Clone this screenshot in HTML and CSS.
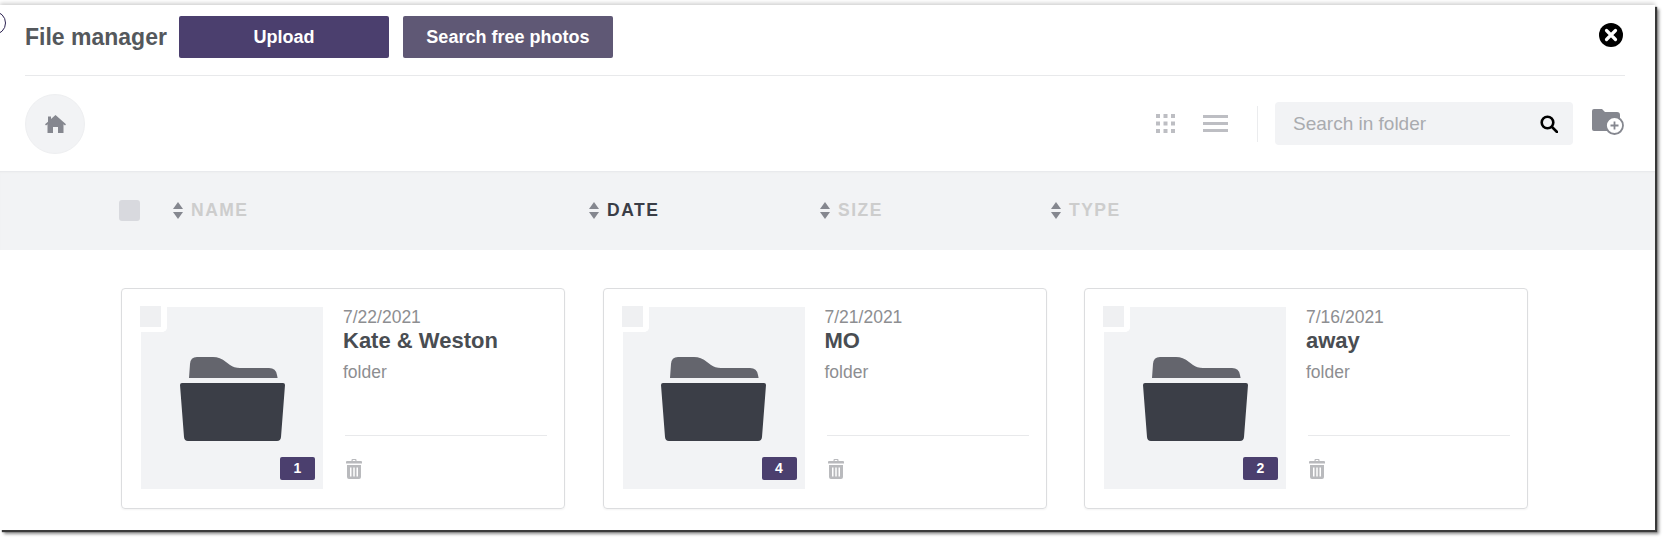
FILE: index.html
```html
<!DOCTYPE html>
<html lang="en">
<head>
    <meta charset="UTF-8">
    <meta name="viewport" content="width=device-width, initial-scale=1.0">
    <title>File manager</title>
    <link rel="stylesheet" href="styles.css">
</head>
<body>
    <svg class="defs" width="0" height="0">
        <symbol id="sort" viewBox="0 0 10 17">
            <path class="sort-up" d="M5 0 10 7H0z"/>
            <path class="sort-down" d="M0 10h10l-5 7z"/>
        </symbol>
        <symbol id="folder" viewBox="0 0 105 84">
            <path fill="#64656d" d="M9 21 10 7q.4-7 7-7h16q7 0 13 5l4 3q4 3 10 3h29q7 0 8 7l.6 3z"/>
            <path fill="#3b3e47" d="M2 26h101q2 0 2 2l-4 52q-.3 4-4 4H8q-3.700 0-4-4L0 28q0-2 2-2z"/>
        </symbol>
        <symbol id="trash" viewBox="0 0 16 20">
            <path d="M5.500 2V1q0-1 1-1h3q1 0 1 1v1H15q1 0 1 1v1.500H0V3q0-1 1-1zM6.700 1v1h2.600V1z"/>
            <path fill-rule="evenodd" d="M1 6h14v12q0 2-2 2H3q-2 0-2-2zm3 2.500v9h1.500v-9zm3.250 0v9h1.500v-9zm3.250 0v9H12v-9z"/>
        </symbol>
    </svg>

    <span class="stray-circle"></span>

    <div class="panel">
        <header class="top-bar">
            <div class="top-inner">
                <h1>File manager</h1>
                <button class="btn btn-upload">Upload</button>
                <button class="btn btn-photos">Search free photos</button>
                <svg class="close-icon" viewBox="0 0 24 24">
                    <circle cx="12" cy="12" r="12" fill="#000"/>
                    <path d="M7.500 7.500l9 9m0-9l-9 9" stroke="#fff" stroke-width="3.200" stroke-linecap="round"/>
                </svg>
            </div>
        </header>

        <div class="toolbar">
            <div class="home-btn">
                <svg width="21" height="18" viewBox="0 0 21 18" fill="#85878f">
                    <path d="M10.500 0 21 9.300l-1 1.200-1.500-1.300V18H13v-6H8v6H2.500V9.200L1 10.500 0 9.300 3 6.700V1.500h3v2.600z"/>
                </svg>
            </div>
            <div class="toolbar-right">
                <svg class="grid-icon" width="19" height="19" viewBox="0 0 19 19" fill="#bdbec3">
                    <path d="M0 0h4v4H0zm7.500 0h4v4h-4zM15 0h4v4h-4zM0 7.500h4v4H0zm7.500 0h4v4h-4zm7.500 0h4v4h-4zM0 15h4v4H0zm7.500 0h4v4h-4zM15 15h4v4h-4z"/>
                </svg>
                <div class="list-icon"><span></span><span></span><span></span></div>
                <div class="sep"></div>
                <div class="search-box">
                    <span class="search-text">Search in folder</span>
                    <svg width="18" height="18" viewBox="0 0 18 18" fill="none" stroke="#000" stroke-width="2.600">
                        <circle cx="7.500" cy="7.500" r="5.800"/>
                        <path d="M12 12l5 5" stroke-linecap="round"/>
                    </svg>
                </div>
                <svg class="add-folder" width="32" height="26" viewBox="0 0 32 26">
                    <path fill="#85878f" d="M0 2q0-2 2-2h8l3 3h12q3 0 3 3v14q0 2-2 2H2q-2 0-2-2z"/>
                    <circle cx="22.500" cy="16.500" r="8.500" fill="#fff" stroke="#85878f" stroke-width="1.800"/>
                    <path d="M22.500 12.500v8m-4-4h8" stroke="#85878f" stroke-width="1.800"/>
                </svg>
            </div>
        </div>

        <div class="sort-bar">
            <span class="check check-all"></span>
            <div class="sort-col col-name"><svg class="sort-icon"><use href="#sort"/></svg>NAME</div>
            <div class="sort-col col-date active"><svg class="sort-icon"><use href="#sort"/></svg>DATE</div>
            <div class="sort-col col-size"><svg class="sort-icon"><use href="#sort"/></svg>SIZE</div>
            <div class="sort-col"><svg class="sort-icon"><use href="#sort"/></svg>TYPE</div>
        </div>

        <div class="cards">
            <div class="card">
                <div class="thumb">
                    <span class="thumb-check"></span>
                    <svg class="folder-icon"><use href="#folder"/></svg>
                    <span class="badge">1</span>
                </div>
                <div class="info">
                    <div class="date">7/22/2021</div>
                    <div class="name">Kate &amp; Weston</div>
                    <div class="kind">folder</div>
                    <div class="actions"><svg class="trash-icon"><use href="#trash"/></svg></div>
                </div>
            </div>
            <div class="card">
                <div class="thumb">
                    <span class="thumb-check"></span>
                    <svg class="folder-icon"><use href="#folder"/></svg>
                    <span class="badge">4</span>
                </div>
                <div class="info">
                    <div class="date">7/21/2021</div>
                    <div class="name">MO</div>
                    <div class="kind">folder</div>
                    <div class="actions"><svg class="trash-icon"><use href="#trash"/></svg></div>
                </div>
            </div>
            <div class="card">
                <div class="thumb">
                    <span class="thumb-check"></span>
                    <svg class="folder-icon"><use href="#folder"/></svg>
                    <span class="badge">2</span>
                </div>
                <div class="info">
                    <div class="date">7/16/2021</div>
                    <div class="name">away</div>
                    <div class="kind">folder</div>
                    <div class="actions"><svg class="trash-icon"><use href="#trash"/></svg></div>
                </div>
            </div>
        </div>
    </div>
</body>
</html>
```

FILE: styles.css
```css
* {
    box-sizing: border-box;
}

body {
    margin: 0;
    height: 540px;
    overflow: hidden;
    background: #fff;
    font-family: "Liberation Sans", Arial, sans-serif;
    padding-top: 5px;
}

.defs {
    position: absolute;
}

/* bit of another circle poking in from the left */
.stray-circle {
    position: absolute;
    left: -18px;
    top: 11px;
    width: 24px;
    height: 24px;
    border: 1.500px solid #2b2150;
    border-radius: 50%;
    z-index: 2;
}

.panel {
    width: 1655px;
    height: 525px;
    background: #fff;
    box-shadow: 0 -2px 4px rgba(0, 0, 0, 0.18), 2px 2px 1px #3c3c3c, 4px 4px 3px #8c8c8c;
}

/* top bar */
.top-bar {
    padding: 11px 30px 0 25px;
}

.top-inner {
    display: flex;
    align-items: center;
    height: 60px;
    padding-bottom: 17px;
    border-bottom: 1px solid #e8e9eb;
}

h1 {
    margin: 0 12px 0 0;
    font-size: 23px;
    font-weight: bold;
    color: #54585c;
}

.btn {
    height: 42px;
    border: none;
    border-radius: 2px;
    color: #fff;
    font-family: "Liberation Sans", Arial, sans-serif;
    font-size: 18px;
    font-weight: bold;
    cursor: pointer;
}

.btn-upload {
    width: 210px;
    margin-right: 14px;
    background: #4b3f6e;
}

.btn-photos {
    width: 210px;
    background: #5f5875;
}

.close-icon {
    width: 24px;
    height: 24px;
    margin-left: auto;
    margin-right: 2px;
    margin-top: -4px;
}

/* toolbar */
.toolbar {
    display: flex;
    align-items: center;
    justify-content: space-between;
    height: 95px;
    padding: 0 31px 0 25px;
}

.home-btn {
    display: flex;
    align-items: center;
    justify-content: center;
    width: 60px;
    height: 60px;
    border-radius: 50%;
    background: #f2f3f5;
    border: 1px solid #eeeff1;
}

.toolbar-right {
    display: flex;
    align-items: center;
}

.list-icon {
    display: flex;
    flex-direction: column;
    gap: 4px;
    width: 25px;
    margin-left: 28px;
}

.list-icon span {
    height: 3px;
    background: #bdbec3;
}

.sep {
    width: 1px;
    height: 36px;
    margin: 0 17px 0 29px;
    background: #ebecee;
}

.search-box {
    display: flex;
    align-items: center;
    justify-content: space-between;
    width: 298px;
    height: 43px;
    padding: 0 15px 0 18px;
    border-radius: 4px;
    background: #f2f3f5;
}

.search-text {
    font-size: 19px;
    color: #a9abaf;
}

.add-folder {
    margin-left: 19px;
    margin-top: -4px;
}

/* sort row */
.sort-bar {
    display: flex;
    align-items: center;
    height: 79px;
    padding-left: 119px;
    background: #f2f3f5;
    box-shadow: inset 0 2px 2px -1px #e6e7e9;
}

.check-all {
    width: 21px;
    height: 21px;
    margin-right: 33px;
    border-radius: 3px;
    background: #d8d9de;
}

.sort-col {
    display: flex;
    align-items: center;
    width: 231px;
    font-size: 17.500px;
    font-weight: bold;
    letter-spacing: 1.500px;
    color: #cdcdcd;
}

.col-name {
    width: 416px;
}

.col-date {
    color: #3a3d46;
}

.sort-icon {
    width: 10px;
    height: 17px;
    margin-right: 8px;
    fill: #85878f;
}

.active .sort-up {
    fill: #c4c5ca;
}

.active .sort-down {
    fill: #2f323a;
}

/* cards */
.cards {
    display: flex;
    gap: 37.500px;
    padding: 38px 0 0 121px;
}

.card {
    display: flex;
    width: 444px;
    height: 221px;
    padding: 18px 17px 18px 19px;
    border: 1px solid #dcdddf;
    border-radius: 4px;
    box-shadow: 0 1px 2px rgba(0, 0, 0, 0.05);
}

.thumb {
    position: relative;
    display: flex;
    align-items: center;
    justify-content: center;
    flex: none;
    width: 182px;
    height: 182px;
    background: #f2f3f5;
}

.thumb-check {
    position: absolute;
    top: -1px;
    left: -1px;
    width: 27px;
    height: 26px;
    border-right: 6px solid #fff;
    border-bottom: 5px solid #fff;
    border-bottom-right-radius: 5px;
    background: #eff0f2;
    background-clip: padding-box;
}

.folder-icon {
    width: 105px;
    height: 84px;
    margin-top: 2px;
}

.badge {
    position: absolute;
    right: 8px;
    bottom: 9px;
    width: 35px;
    height: 23px;
    border-radius: 2px;
    background: #4b3f6e;
    color: #fff;
    font-size: 14px;
    font-weight: bold;
    line-height: 23px;
    text-align: center;
}

.info {
    display: flex;
    flex-direction: column;
    flex: 1;
    margin-left: 20px;
}

.date {
    font-size: 17.500px;
    line-height: 20px;
    color: #8d8e91;
}

.name {
    font-size: 22px;
    font-weight: bold;
    line-height: 28px;
    color: #494d52;
}

.kind {
    margin-top: 7px;
    font-size: 17.500px;
    line-height: 20px;
    color: #8d8e91;
}

.actions {
    margin: 53px 0 0 2px;
    padding-top: 23px;
    border-top: 1px solid #e8e9eb;
}

.trash-icon {
    display: block;
    width: 16px;
    height: 20px;
    margin-left: 1px;
    fill: #b9babd;
}
```
